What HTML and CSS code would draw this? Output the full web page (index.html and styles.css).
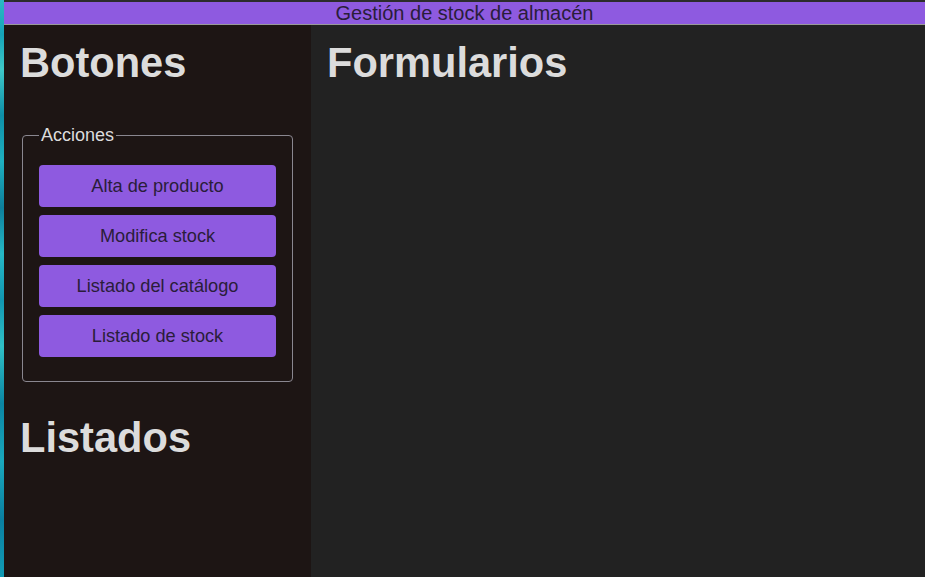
FILE: index.html
```html
<!DOCTYPE html>
<html lang="es">
<head>
<meta charset="utf-8">
<title>Gestión de stock de almacén</title>
<link rel="stylesheet" href="styles.css">
</head>
<body>
<div class="desktop-strip"></div>
<div class="app">
  <header class="topbar">Gestión de stock de almacén</header>
  <div class="layout">
    <aside class="sidebar">
      <h1 class="heading">Botones</h1>
      <fieldset class="actions">
        <legend class="actions-legend">Acciones</legend>
        <button class="action-btn">Alta de producto</button>
        <button class="action-btn">Modifica stock</button>
        <button class="action-btn">Listado del catálogo</button>
        <button class="action-btn">Listado de stock</button>
      </fieldset>
      <h1 class="heading heading-listados">Listados</h1>
    </aside>
    <main class="content">
      <h1 class="heading">Formularios</h1>
    </main>
  </div>
</div>
</body>
</html>
```
FILE: styles.css
```css
html, body {
  margin: 0;
  height: 100%;
}

body {
  display: flex;
  background: #222222;
  font-family: "Liberation Sans", Arial, sans-serif;
  overflow: hidden;
}

.desktop-strip {
  width: 4px;
  flex: none;
  background:
    linear-gradient(180deg,
      #2ab9c4 0%, #15a3b8 6%, #3fc8c8 12%, #0e8fa8 20%,
      #1fb0c0 28%, #0d7f9c 36%, #26b8c6 44%, #1297b2 52%,
      #30c0c6 60%, #0b86a4 70%, #1aa8bd 80%, #0a7fa0 90%, #129cb6 100%);
}

.app {
  flex: 1;
  display: flex;
  flex-direction: column;
  border-top: 2px solid #2c2c2c;
  min-width: 0;
}

.topbar {
  height: 22px;
  line-height: 22px;
  background: #8e5ae0;
  color: #2a1d3a;
  font-size: 20px;
  text-align: center;
  border-bottom: 1px solid #9a9a9a;
}

.layout {
  flex: 1;
  display: flex;
}

.sidebar {
  width: 275px;
  padding: 14px 16px 0;
  background: #1d1514;
}

.content {
  flex: 1;
  padding: 14px 16px 0;
  background: #222222;
}

.heading {
  margin: 0;
  font-size: 41.6px;
  line-height: 47px;
  font-weight: bold;
  color: #dcdcdc;
}

.heading-listados {
  margin-top: 32px;
}

.actions {
  margin: 39px 2px 0;
  padding: 19px 16px 24px;
  border: 1px solid #8a8790;
  border-radius: 4px;
  display: flex;
  flex-direction: column;
  gap: 8px;
}

.actions-legend {
  padding: 0 2px;
  font-size: 18px;
  color: #dcdcdc;
}

.action-btn {
  height: 42px;
  border: none;
  border-radius: 4px;
  background: #8e5ae0;
  color: #2a1d3a;
  font-family: "Liberation Sans", Arial, sans-serif;
  font-size: 18.2px;
  padding: 0;
}
```
